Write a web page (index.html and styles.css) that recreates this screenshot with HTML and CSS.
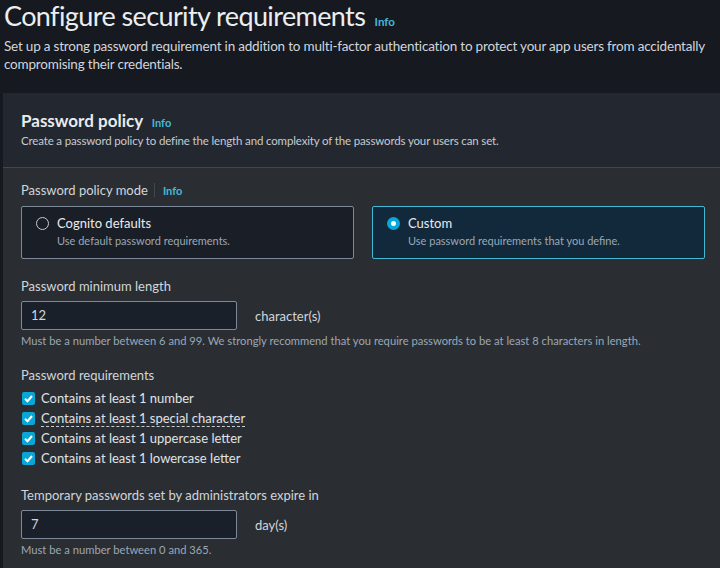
FILE: index.html
```html
<!DOCTYPE html>
<html>
<head>
<meta charset="utf-8">
<link rel="stylesheet" href="styles.css">
</head>
<body>
<div class="page">
  <header class="page-head">
    <h1 class="title">Configure security requirements <a class="info info-lg">Info</a></h1>
    <p class="lead">Set up a strong password requirement in addition to multi-factor authentication to protect your app users from accidentally compromising their credentials.</p>
  </header>
  <section class="panel">
    <div class="panel-head">
      <h2 class="panel-title">Password policy <a class="info">Info</a></h2>
      <p class="panel-desc">Create a password policy to define the length and complexity of the passwords your users can set.</p>
    </div>
    <div class="panel-body">
      <div class="field">
        <div class="label">Password policy mode <span class="sep"></span><a class="info">Info</a></div>
        <div class="tiles">
          <div class="tile">
            <span class="radio"></span>
            <div class="tile-text">
              <div class="tile-title">Cognito defaults</div>
              <div class="tile-desc">Use default password requirements.</div>
            </div>
          </div>
          <div class="tile tile-on">
            <span class="radio radio-on"></span>
            <div class="tile-text">
              <div class="tile-title">Custom</div>
              <div class="tile-desc">Use password requirements that you define.</div>
            </div>
          </div>
        </div>
      </div>
      <div class="field">
        <div class="label">Password minimum length</div>
        <div class="input-row">
          <div class="input">12</div>
          <span class="unit">character(s)</span>
        </div>
        <div class="hint">Must be a number between 6 and 99. We strongly recommend that you require passwords to be at least 8 characters in length.</div>
      </div>
      <div class="field">
        <div class="label">Password requirements</div>
        <ul class="checks">
          <li><span class="cb"><svg viewBox="0 0 13 13" width="13" height="13"><path d="M3 6.8 L5.5 9.2 L10 4" fill="none" stroke="#fff" stroke-width="2"/></svg></span><span>Contains at least 1 number</span></li>
          <li><span class="cb"><svg viewBox="0 0 13 13" width="13" height="13"><path d="M3 6.8 L5.5 9.2 L10 4" fill="none" stroke="#fff" stroke-width="2"/></svg></span><span class="dotted">Contains at least 1 special character</span></li>
          <li><span class="cb"><svg viewBox="0 0 13 13" width="13" height="13"><path d="M3 6.8 L5.5 9.2 L10 4" fill="none" stroke="#fff" stroke-width="2"/></svg></span><span>Contains at least 1 uppercase letter</span></li>
          <li><span class="cb"><svg viewBox="0 0 13 13" width="13" height="13"><path d="M3 6.8 L5.5 9.2 L10 4" fill="none" stroke="#fff" stroke-width="2"/></svg></span><span>Contains at least 1 lowercase letter</span></li>
        </ul>
      </div>
      <div class="field">
        <div class="label">Temporary passwords set by administrators expire in</div>
        <div class="input-row">
          <div class="input">7</div>
          <span class="unit">day(s)</span>
        </div>
        <div class="hint">Must be a number between 0 and 365.</div>
      </div>
    </div>
  </section>
</div>
</body>
</html>
```
FILE: styles.css
```css
html, body { margin: 0; padding: 0; }
body {
  background: #16191f;
  font-family: Lato, "Open Sans", sans-serif;
  color: #d1d5db;
  width: 720px;
  height: 568px;
  overflow: hidden;
}
.page { padding: 0 0 0 3px; }
.page-head { padding: 0 0 0 1px; }
.title {
  margin: 0;
  font-size: 27px;
  letter-spacing: -0.6px;
  font-weight: 400;
  color: #ebeef0;
  line-height: 32px;
}
.info {
  color: #44b9d6;
  font-weight: 700;
  font-size: 11px;
  line-height: 1;
  letter-spacing: 0;
  margin-left: 4px;
}
.info-lg { font-size: 11.5px; margin-left: 3px; }
.lead {
  margin: 5px 0 0;
  font-size: 13.5px;
  letter-spacing: -0.2px;
  line-height: 18px;
  color: #d1d5db;
  width: 716px;
}
.panel {
  margin-top: 20px;
  background: #2a2e33;
  min-height: 480px;
}
.panel-head {
  background: #232730;
  padding: 17px 18px 18px;
  border-bottom: 1px solid #414750;
}
.panel-title {
  margin: 0;
  font-size: 17px;
  font-weight: 700;
  line-height: 22px;
  color: #e9ebed;
}
.panel-title .info { margin-left: 5px; }
.panel-desc {
  margin: 1px 0 0;
  font-size: 11.5px;
  letter-spacing: -0.15px;
  line-height: 16px;
  color: #c6cbd1;
}
.panel-body { padding: 13px 18px 0; }
.field { margin-bottom: 18px; }
.label {
  font-size: 13px;
  line-height: 18px;
  color: #d1d5db;
  display: flex;
  align-items: center;
}
.sep {
  display: inline-block;
  width: 1px;
  height: 14px;
  background: #414750;
  margin: 0 8px 0 6px;
}
.label .info { margin-left: 0; }
.tiles {
  display: grid;
  grid-template-columns: 333px 333px;
  column-gap: 18px;
  margin-top: 7px;
}
.tile {
  border: 1px solid #7d8998;
  border-radius: 2px;
  background: #1a1f27;
  height: 53px;
  box-sizing: border-box;
  display: flex;
  padding: 8px 14px;
  gap: 8px;
}
.tile-on {
  border-color: #44b9d6;
  background: #12293b;
}
.radio {
  width: 13px;
  height: 13px;
  border: 1.5px solid #c6cbd1;
  border-radius: 50%;
  margin-top: 2px;
  box-sizing: border-box;
  flex: none;
}
.radio-on {
  border: 4px solid #0aa6d6;
  background: #fff;
}
.tile-title { font-size: 13px; line-height: 17px; color: #e9ebed; }
.tile-desc { font-size: 11px; line-height: 16px; color: #9ba7b6; margin-top: 1px; }
.input-row {
  display: flex;
  align-items: center;
  margin-top: 6px;
}
.input {
  width: 216px;
  height: 29px;
  box-sizing: border-box;
  border: 1px solid #7d8998;
  border-radius: 2px;
  background: #1a2029;
  font-size: 13px;
  line-height: 27px;
  padding: 0 9px;
  color: #d1d5db;
}
.unit { margin-left: 18px; font-size: 13px; color: #d1d5db; }
.hint {
  font-size: 11.2px;
  line-height: 15px;
  color: #9ba7b6;
  margin-top: 3px;
}
.checks { list-style: none; margin: 4px 0 0; padding: 0; }
.checks li {
  display: flex;
  align-items: center;
  height: 20px;
  font-size: 13px;
  color: #e0e3e6;
}
.cb {
  width: 13px;
  height: 13px;
  background: #0aa6d6;
  border-radius: 2px;
  margin: 1px 6px 0 1px;
  display: inline-flex;
}
.dotted { border-bottom: 1px dashed #c6cbd1; line-height: 16px; }
```
